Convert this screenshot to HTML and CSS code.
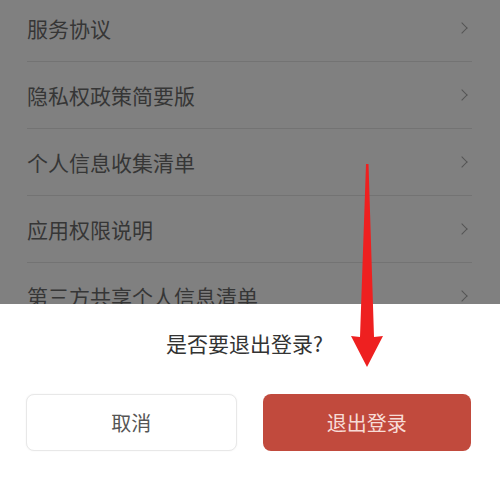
FILE: index.html
```html
<!DOCTYPE html>
<html lang="zh-CN">
<head>
    <meta charset="UTF-8">
    <meta name="viewport" content="width=device-width, initial-scale=1.0">
    <title>设置</title>
    <link rel="stylesheet" href="styles.css">
</head>
<body>
    <div class="page">
        <ul class="menu">
            <li class="menu-item"><span>服务协议</span><i class="chevron"></i></li>
            <li class="menu-item"><span>隐私权政策简要版</span><i class="chevron"></i></li>
            <li class="menu-item"><span>个人信息收集清单</span><i class="chevron"></i></li>
            <li class="menu-item"><span>应用权限说明</span><i class="chevron"></i></li>
            <li class="menu-item"><span>第三方共享个人信息清单</span><i class="chevron"></i></li>
        </ul>

        <!-- 退出登录确认弹层 -->
        <div class="sheet">
            <p class="sheet-title">是否要退出登录?</p>
            <div class="sheet-actions">
                <button class="btn btn-cancel">取消</button>
                <button class="btn btn-logout">退出登录</button>
            </div>
        </div>

        <svg class="arrow" width="500" height="478" viewBox="0 0 500 478">
            <polygon points="366,164 368.5,164 374,337 383,336 367,367 351,336 360,337" fill="#ee2020"/>
        </svg>
    </div>
</body>
</html>
```

FILE: styles.css
```css
* {
    box-sizing: border-box;
}
body {
    margin: 0;
    font-family: "Noto Sans CJK SC", "Noto Sans", sans-serif;
    background-color: #808080;
}
.page {
    position: relative;
    width: 500px;
    height: 478px;
    overflow: hidden;
}
.menu {
    list-style: none;
    margin: -5px 0 0;
    padding: 0 28px 0 27px;
}
.menu-item {
    display: flex;
    align-items: center;
    justify-content: space-between;
    height: 67px;
    border-bottom: 1px solid #737373;
    font-size: 21px;
    color: #363636;
}
.chevron {
    width: 8px;
    height: 8px;
    margin-right: 6px;
    border-top: 1.5px solid #555;
    border-right: 1.5px solid #555;
    transform: rotate(45deg);
}
.sheet {
    position: absolute;
    left: 0;
    right: 0;
    bottom: 0;
    height: 174px;
    background: #fff;
    padding: 25px 29px 0 26px;
}
.sheet-title {
    margin: 0;
    text-align: center;
    font-size: 21px;
    line-height: 28px;
    color: #333;
    padding-right: 8px;
}
.sheet-actions {
    display: flex;
    gap: 26px;
    margin-top: 37px;
}
.btn {
    flex: 1;
    height: 57px;
    border-radius: 8px;
    font-family: inherit;
    font-size: 20px;
}
.btn-cancel {
    background: #fff;
    border: 1px solid #e8e8e8;
    box-shadow: 0 0 2px rgba(0, 0, 0, 0.06);
    color: #555;
}
.btn-logout {
    background: #c14a3d;
    border: none;
    color: #f7dcd7;
}
.arrow {
    position: absolute;
    left: 0;
    top: 0;
    pointer-events: none;
}
```
